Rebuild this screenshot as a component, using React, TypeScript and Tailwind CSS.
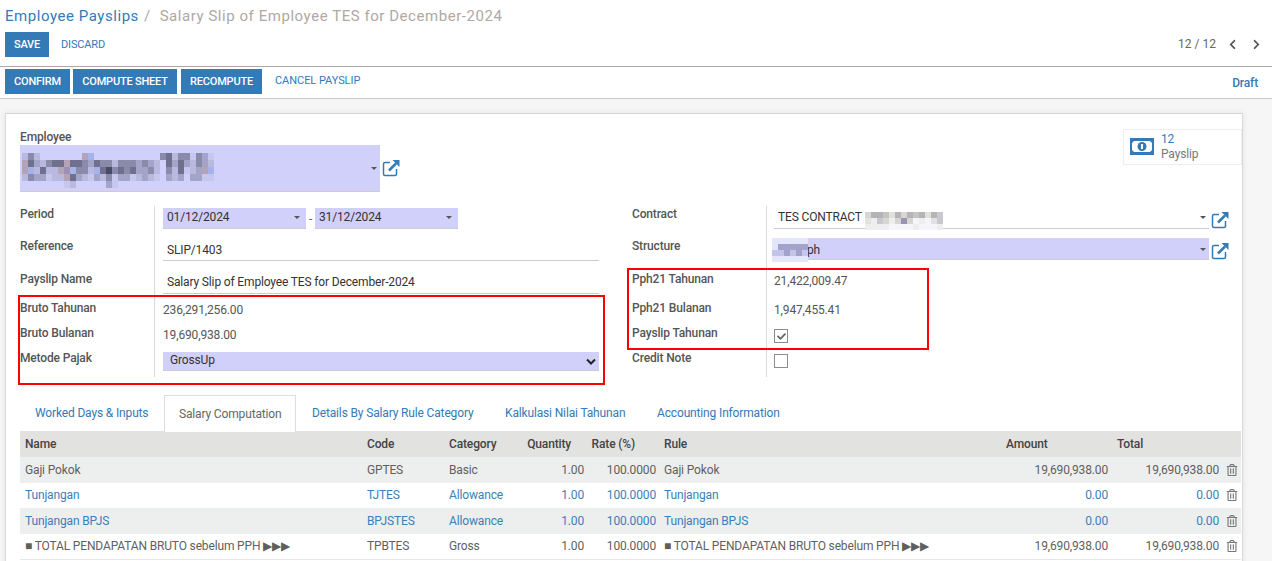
import React from 'react';
import { FaCheck, FaChevronLeft, FaChevronRight, FaRegTrashAlt } from 'react-icons/fa';

const palette: Record<string, string> = {
  a: '#b9b9df', b: '#a4a4c8', c: '#8a8aab', d: '#6f6f8e', e: '#4a4a68', f: '#a6b2ea', g: '#b3a3b6', n: '#9c90b4', r: '#c6c6ee',
  i: '#d6d6d2', j: '#c4c4c0', k: '#b4b4b8', l: '#e2e0d8', m: '#eeeeee', o: '#f6f6fa', s: '#e0e4e0', t: '#c8c8d0',
  p: '#e4e4fb', q: '#a2a2cc', u: '#c4c4e8',
};

const employeeMosaic = [
  'aca.......gf...........cdaccrcbr',
  'gdbacddgddcbdccacccbcba.dbdbacba',
  'gfadaagnfccafdecdcdbbca.cadrabgf',
  'acbbraagdbarbacrbbrabar.bab bbrr',
  '.......ra.....br................',
];

const contractMosaic = [
  'ikkjlkikjklkt',
  'smtiminiomost',
  'mmmmoooomooom',
];

const structureMosaic = [
  'pppppp',
  'pqqbqb',
  'uuquqr',
  'pppppp',
];

const Mosaic = ({ rows, w, h, className }: { rows: string[]; w: number; h: number; className: string }) => (
  <svg className={className} width={rows[0].length * w} height={rows.length * h} shapeRendering="crispEdges">
    {rows.map((row, y) =>
      row.split('').map((c, x) =>
        palette[c] ? <rect key={`${x}-${y}`} x={x * w} y={y * h} width={w} height={h} fill={palette[c]} /> : null
      )
    )}
  </svg>
);

const ExtLink = ({ className }: { className: string }) => (
  <svg className={className} width="18" height="18" viewBox="0 0 18 18" fill="none">
    <path d="M8 3.500H3a1.500 1.500 0 0 0-1.500 1.500v10A1.500 1.500 0 0 0 3 16.500h10a1.500 1.500 0 0 0 1.500-1.500V10" stroke="#337ab7" strokeWidth="1.500" />
    <path d="M7 11.500 14 4.500" stroke="#337ab7" strokeWidth="2.500" />
    <path d="M10.500 1h7v7z" fill="#337ab7" />
  </svg>
);

const Caret = () => <span className="w-0 h-0 border-x-[3px] border-x-transparent border-t-[3px] border-t-[#555]" />;

const Label = ({ children }: { children: React.ReactNode }) => (
  <div className="text-[12px] font-medium text-[#555] leading-none">{children}</div>
);

const rows = [
  { name: 'Gaji Pokok', code: 'GPTES', cat: 'Basic', amount: '19,690,938.00', bg: 'bg-[#edeeee]', link: false },
  { name: 'Tunjangan', code: 'TJTES', cat: 'Allowance', amount: '0.00', bg: 'bg-white', link: true },
  { name: 'Tunjangan BPJS', code: 'BPJSTES', cat: 'Allowance', amount: '0.00', bg: 'bg-[#edeeee]', link: true },
  { name: '■ TOTAL PENDAPATAN BRUTO sebelum PPH ▶▶▶', code: 'TPBTES', cat: 'Gross', amount: '19,690,938.00', bg: 'bg-white', link: false },
];

export default function App() {
  return (
    <div className="relative w-[1272px] h-[561px] overflow-hidden bg-[#f6f6f6] text-[12px] tracking-[-0.15px] text-[#555] font-['Roboto',sans-serif]">
      {/* Control panel */}
      <div className="h-[67px] bg-white border-b border-[#aaaaaa] px-[5px]">
        <div className="h-[32px] flex items-center text-[15px] tracking-[0.55px]">
          <span className="text-[#337ab7]">Employee Payslips</span>
          <span className="text-[#b0a8a4] ml-[5px]">/</span>
          <span className="text-[#b0a8a4] ml-[9px]">Salary Slip of Employee TES for December-2024</span>
        </div>
        <div className="flex items-center h-[25px]">
          <button className="h-[25px] w-[44px] pt-px bg-[#337ab7] text-white text-[11px] tracking-[-0.2px] font-medium">SAVE</button>
          <span className="ml-[12px] pt-px text-[#337ab7] text-[11px]">DISCARD</span>
          <span className="ml-auto pb-[2px] text-[12px] tracking-normal text-[#666]">12 / 12</span>
          <FaChevronLeft className="ml-[11px] text-[#555] text-[11px]" />
          <FaChevronRight className="ml-[13px] mr-[5px] text-[#555] text-[11px]" />
        </div>
      </div>

      {/* Status bar */}
      <div className="h-[32px] bg-white border-b border-[#cccccc] px-[5px] pt-[2px] flex items-start gap-[3px]">
        <button className="h-[25px] w-[65px] pt-[2px] bg-[#337ab7] text-white text-[11px] tracking-[-0.2px] font-medium">CONFIRM</button>
        <button className="h-[25px] w-[104px] pt-[2px] bg-[#337ab7] text-white text-[11px] tracking-[-0.2px] font-medium">COMPUTE SHEET</button>
        <button className="h-[25px] w-[81px] pt-[2px] ml-[1px] bg-[#337ab7] text-white text-[11px] tracking-[-0.2px] font-medium">RECOMPUTE</button>
        <span className="ml-[10px] h-[25px] flex items-center text-[#337ab7] text-[11px] tracking-[-0.05px]">CANCEL PAYSLIP</span>
        <span className="ml-auto mr-[9px] h-[25px] pt-[2px] flex items-center text-[#337ab7] text-[12px] font-medium">Draft</span>
      </div>

      {/* Sheet */}
      <div className="relative ml-[5px] mt-[14px] w-[1238px] h-[470px] bg-white border border-[#d9d9d9] shadow-[0_0_6px_rgba(0,0,0,0.08)]">
        <div className="absolute left-[1117px] top-[15px] w-[119px] h-[36px] border border-[#eeeeee] flex items-center pl-[6px]">
          <svg width="24" height="17" viewBox="0 0 24 17" className="shrink-0 mb-[2px]">
            <path fillRule="evenodd" fill="#337ab7" d="M0 0h24v17H0zM4 3 2 5v7l2 2h16l2-2V5l-2-2z" />
            <circle cx="12" cy="8.500" r="4.500" fill="#337ab7" />
            <rect x="11" y="6" width="2" height="5" fill="#ffffff" />
          </svg>
          <div className="ml-[7px] leading-[15px]">
            <div className="text-[#337ab7]">12</div>
            <div className="text-[#777]">Payslip</div>
          </div>
        </div>

        <div className="pl-[14px] pr-0">
          <div className="pt-[17px] h-[31px] font-medium text-[12px] leading-none">Employee</div>
          <div className="flex items-end">
            <div className="relative w-[360px] h-[47px] bg-[#d0d0fb] border-b border-[#cccccc] flex items-center justify-end pr-[3px]">
              <Mosaic rows={employeeMosaic} w={6} h={7} className="absolute left-[2px] top-[8px]" />
              <Caret />
            </div>
            <ExtLink className="ml-[2px] mb-[15px]" />
          </div>
        </div>

        {/* Form columns */}
        <div className="flex pl-[14px] mt-[14px]">
          <div className="w-[579px] flex">
            <div className="w-[135px] border-r border-[#d9d9d9] h-[171px] relative">
              <div className="absolute top-[2px]"><Label>Period</Label></div>
              <div className="absolute top-[34px]"><Label>Reference</Label></div>
              <div className="absolute top-[67px]"><Label>Payslip Name</Label></div>
              <div className="absolute top-[96px]"><Label>Bruto Tahunan</Label></div>
              <div className="absolute top-[121px]"><Label>Bruto Bulanan</Label></div>
              <div className="absolute top-[146px]"><Label>Metode Pajak</Label></div>
            </div>
            <div className="ml-[8px] flex-1 text-[12px]">
              <div className="flex items-center mt-[2px] h-[21px]">
                <div className="w-[143px] h-[21px] bg-[#d0d0fb] border-b border-[#cccccc] flex items-center justify-between pl-[4px] pr-[6px] pb-[2px] text-[#333]">01/12/2024 <Caret /></div>
                <span className="w-[9px] text-center">-</span>
                <div className="w-[143px] h-[21px] bg-[#d0d0fb] border-b border-[#cccccc] flex items-center justify-between pl-[4px] pr-[6px] pb-[2px] text-[#333]">31/12/2024 <Caret /></div>
              </div>
              <div className="mt-[10px] h-[22px] w-[436px] border-b border-[#cccccc] pl-[4px] pt-[4px] text-[#333] leading-[14px]">SLIP/1403</div>
              <div className="mt-[11px] h-[22px] w-[436px] border-b border-[#cccccc] pl-[4px] pt-[3px] text-[#333] leading-[14px]">Salary Slip of Employee TES for December-2024</div>
              <div className="mt-[9px] leading-[14px]">236,291,256.00</div>
              <div className="mt-[11px] leading-[14px]">19,690,938.00</div>
              <div className="mt-[10px] h-[19px] w-[436px] bg-[#d0d0fb] border-b border-[#cccccc] flex items-center justify-between pl-[7px] pr-[3px] pb-[2px] text-[#333]">
                GrossUp
                <svg width="10" height="7" viewBox="0 0 10 7" className="mt-[2px]"><path d="M1 1.500 5 5.500 9 1.500" fill="none" stroke="#222" strokeWidth="2" /></svg>
              </div>
            </div>
          </div>

          <div className="ml-[33px] flex">
            <div className="w-[135px] border-r border-[#d9d9d9] h-[171px] relative">
              <div className="absolute top-[2px]"><Label>Contract</Label></div>
              <div className="absolute top-[34px]"><Label>Structure</Label></div>
              <div className="absolute top-[67px]"><Label>Pph21 Tahunan</Label></div>
              <div className="absolute top-[96px]"><Label>Pph21 Bulanan</Label></div>
              <div className="absolute top-[121px]"><Label>Payslip Tahunan</Label></div>
              <div className="absolute top-[146px]"><Label>Credit Note</Label></div>
            </div>
            <div className="ml-[7px] text-[12px]">
              <div className="flex items-end mt-[2px]">
                <div className="relative w-[435px] h-[21px] border-b border-[#cccccc] flex items-center justify-between pl-[4px] pr-[3px] pb-[2px] text-[#333]">
                  TES CONTRACT
                  <Mosaic rows={contractMosaic} w={6} h={6} className="absolute left-[91px] top-[4px]" />
                  <Caret />
                </div>
                <ExtLink className="ml-[2px]" />
              </div>
              <div className="flex items-end mt-[9px]">
                <div className="relative w-[435px] h-[22px] bg-[#d0d0fb] border-b border-[#cccccc] flex items-center justify-between pl-[33px] pr-[3px] pt-[2px] text-[#333]">
                  ph
                  <Mosaic rows={structureMosaic} w={6} h={6} className="absolute left-[-2px] top-0" />
                  <Caret />
                </div>
                <ExtLink className="ml-[2px]" />
              </div>
              <div className="mt-[14px] leading-[14px]">21,422,009.47</div>
              <div className="mt-[15px] leading-[14px]">1,947,455.41</div>
              <div className="mt-[12px] w-[14px] h-[14px] border border-[#8c8c8c] flex items-center justify-center">
                <FaCheck className="text-[9px] text-[#666]" />
              </div>
              <div className="mt-[11px] w-[14px] h-[14px] border border-[#8c8c8c]" />
            </div>
          </div>
        </div>

        {/* Tabs */}
        <div className="ml-[14px] mt-[18px] w-[1221px] flex h-[36px] text-[12px] text-[#337ab7]">
          <div className="w-[144px] pl-[15px] pt-[9px]">Worked Days &amp; Inputs</div>
          <div className="w-[132px] h-[37px] bg-white border border-b-0 border-[#dddddd] pl-[14px] pt-[9px] text-[#666] relative z-10">Salary Computation</div>
          <div className="w-[193px] pl-[16px] pt-[9px]">Details By Salary Rule Category</div>
          <div className="w-[168px] pl-[16px] pt-[9px]">Kalkulasi Nilai Tahunan</div>
          <div className="pt-[9px]">Accounting Information</div>
        </div>

        {/* Lines */}
        <div className="ml-[14px] w-[1221px] text-[12px]">
          <div className="grid grid-cols-[342px_82px_71px_74px_70px_345px_109px_111px_17px] h-[26px] items-center bg-[#e2e2e0] font-medium text-[#444]">
            <div className="pl-[5px]">Name</div>
            <div className="pl-[5px]">Code</div>
            <div className="pl-[5px]">Category</div>
            <div className="pr-[18px] text-right">Quantity</div>
            <div className="pr-[24px] text-right">Rate (%)</div>
            <div className="pl-[5px]">Rule</div>
            <div className="pl-[2px]">Amount</div>
            <div className="pl-[4px]">Total</div>
            <div />
          </div>
          {rows.map((r) => (
            <div key={r.code} className={`grid grid-cols-[342px_82px_71px_74px_70px_345px_109px_111px_17px] h-[25.5px] items-center ${r.bg} ${r.link ? 'text-[#3a80ba]' : 'text-[#5f5f5f]'}`}>
              <div className="pl-[5px] whitespace-nowrap">{r.name}</div>
              <div className="pl-[5px]">{r.code}</div>
              <div className="pl-[5px]">{r.cat}</div>
              <div className="pr-[5px] text-right">1.00</div>
              <div className="pr-[3px] text-right">100.0000</div>
              <div className="pl-[5px] whitespace-nowrap">{r.name}</div>
              <div className="pr-[5px] text-right">{r.amount}</div>
              <div className="pr-[5px] text-right">{r.amount}</div>
              <FaRegTrashAlt className="ml-[2px] text-[12px] text-[#777]" />
            </div>
          ))}
          <div className="h-px bg-[#e6e6e6]" />
        </div>
      </div>

      {/* Annotation boxes drawn over the form */}
      <div className="absolute left-[18px] top-[295px] w-[587px] h-[90px] border-2 border-[#ff0000]" />
      <div className="absolute left-[627px] top-[268px] w-[302px] h-[82px] border-2 border-[#ff0000]" />
    </div>
  );
}
